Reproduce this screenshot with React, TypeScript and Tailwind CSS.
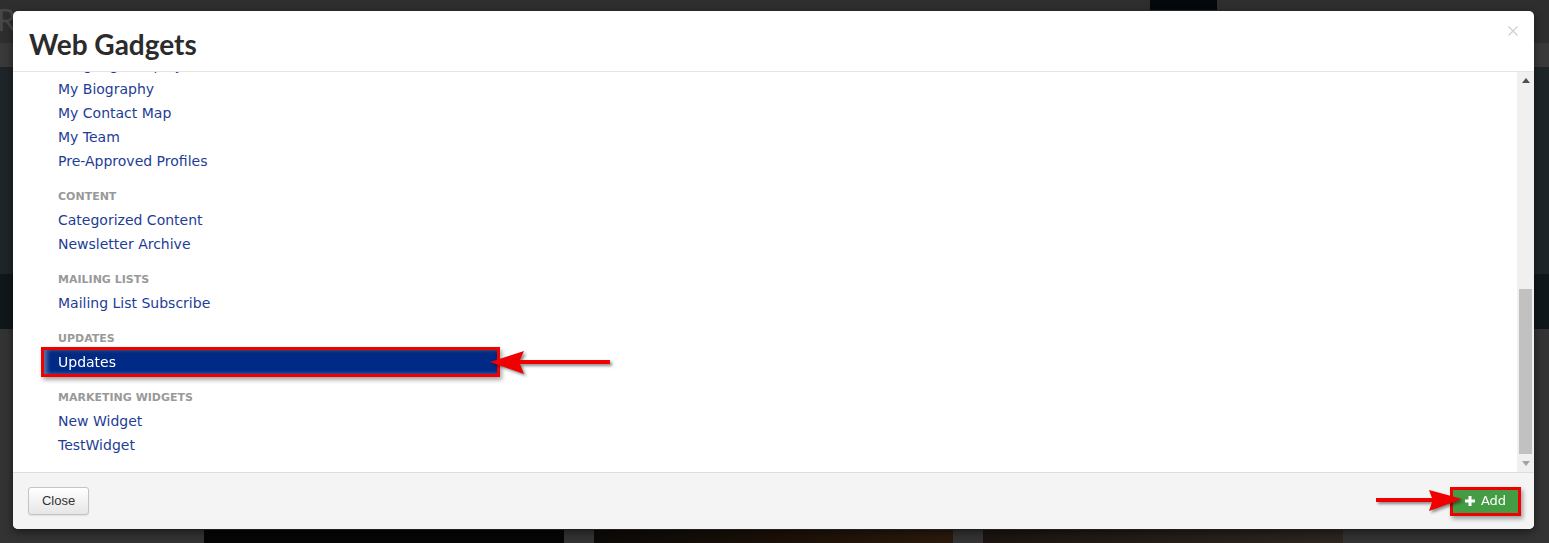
import React from "react";

type Section = { title?: string; items: string[] };

const sections: Section[] = [
  { items: ["Language Display", "My Biography", "My Contact Map", "My Team", "Pre-Approved Profiles"] },
  { title: "CONTENT", items: ["Categorized Content", "Newsletter Archive"] },
  { title: "MAILING LISTS", items: ["Mailing List Subscribe"] },
  { title: "UPDATES", items: ["Updates"] },
  { title: "MARKETING WIDGETS", items: ["New Widget", "TestWidget"] },
];

const verdana = "font-['DejaVu_Sans','Verdana',sans-serif]";

function LeftArrow() {
  return (
    <svg
      className="absolute left-[488px] top-[349px] drop-shadow-[2px_2px_1.5px_rgba(0,0,0,0.45)]"
      width="126"
      height="28"
      viewBox="0 0 126 28"
    >
      <path d="M2 13 L36 2 L32 11 L122 11 L122 15 L32 15 L36 25 Z" fill="#f00000" />
    </svg>
  );
}

function RightArrow() {
  return (
    <svg
      className="absolute left-[1374px] top-[488px] drop-shadow-[2px_2px_1.5px_rgba(0,0,0,0.45)]"
      width="92"
      height="28"
      viewBox="0 0 92 28"
    >
      <path d="M2 10 L58 10 L55 2 L88 11 L55 23 L58 14 L2 14 Z" fill="#f00000" />
    </svg>
  );
}

function Scrollbar() {
  return (
    <div className="flex w-[17px] shrink-0 flex-col bg-[#f0f0f0]">
      <div className="flex h-[17px] items-center justify-center">
        <svg width="8" height="5" viewBox="0 0 8 5">
          <path d="M0 5 L4 0 L8 5 Z" fill="#505050" />
        </svg>
      </div>
      <div className="h-[200px]" />
      <div className="mx-[2px] h-[165px] bg-[#c1c1c1]" />
      <div className="flex-1" />
      <div className="flex h-[17px] items-center justify-center">
        <svg width="8" height="5" viewBox="0 0 8 5">
          <path d="M0 0 L8 0 L4 5 Z" fill="#a3a3a3" />
        </svg>
      </div>
    </div>
  );
}

function GadgetList() {
  return (
    <div className="min-w-0 flex-1 overflow-hidden">
      <div className={`-mt-[19px] pl-[31px] ${verdana}`}>
        {sections.map((s, i) => (
          <div key={i} className={s.title ? "pt-[10px]" : ""}>
            {s.title && (
              <div className="h-[25px] pl-[14px] pt-[2px] text-[11px] font-bold leading-[23px] text-[#999]">
                {s.title}
              </div>
            )}
            {s.items.map((item) =>
              item === "Updates" ? (
                <div
                  key={item}
                  className="h-6 w-[453px] bg-[#012a87] pl-[14px] text-[14px] leading-6 text-white shadow-[inset_3px_0_4px_rgba(160,170,200,0.6),inset_0_2px_3px_rgba(0,0,0,0.35)] outline-3 outline-[#f00000] drop-shadow-[2px_3px_2px_rgba(0,0,0,0.35)]"
                >
                  {item}
                </div>
              ) : (
                <div key={item} className="h-6 pl-[14px] text-[14px] leading-6 text-[#1d3d96]">
                  {item}
                </div>
              )
            )}
          </div>
        ))}
      </div>
    </div>
  );
}

export default function App() {
  return (
    <div className="relative h-[543px] w-[1549px] overflow-hidden bg-[#333333]">
      {/* page behind the overlay */}
      <div className="h-[43px] bg-[#2e2e2e]">
        <div className="-ml-[3px] pt-[4px] font-['Lato',sans-serif] text-[30px] leading-none text-[#474747]">R</div>
      </div>
      <div className="h-[24px] bg-[#393939]" />
      <div className="h-[207px] bg-[#1e2529]" />
      <div className="h-[55px] bg-[#10171b]" />
      <div className="h-[201px]" />
      <div className="flex gap-[30px] pl-[204px]">
        <div className="h-[14px] w-[360px] bg-[#050505]" />
        <div className="h-[14px] w-[359px] bg-gradient-to-r from-[#0c0a08] via-[#1a1008] to-[#2a1a0c]" />
        <div className="h-[14px] w-[360px] bg-gradient-to-r from-[#1c1410] to-[#2c2520]" />
      </div>
      <div className="absolute left-[1150px] top-0 h-[10px] w-[67px] bg-[#02080c]" />

      {/* modal */}
      <div className="absolute left-[13px] top-[11px] flex h-[518px] w-[1521px] flex-col overflow-hidden rounded-[5px] bg-white shadow-[0_3px_9px_rgba(0,0,0,0.5)]">
        <div className="flex h-[61px] shrink-0 items-start justify-between border-b border-[#e5e5e5] pl-[16px] pr-[16px]">
          <h1 className="pt-[18px] font-['Lato',sans-serif] text-[28px] font-bold leading-[31px] text-[#2b2b2b]">
            Web Gadgets
          </h1>
          <button className="mt-[15px]">
            <svg width="10" height="10" viewBox="0 0 10 10">
              <path d="M0.5 0.5 L9.5 9.5 M9.5 0.5 L0.5 9.5" stroke="#cfcfcf" strokeWidth="1.2" />
            </svg>
          </button>
        </div>
        <div className="flex h-[400px] shrink-0">
          <GadgetList />
          <Scrollbar />
        </div>
        <div className="flex flex-1 items-center justify-between border-t border-[#dddddd] bg-[#f4f4f4] pl-[15px] pr-[16px]">
          <button className="h-[28px] w-[61px] rounded-[3px] border border-[#c4c4c4] bg-gradient-to-b from-white to-[#e6e6e6] font-['Liberation_Sans',sans-serif] text-[13px] text-[#333] shadow-[0_1px_1px_rgba(0,0,0,0.08)]">
            Close
          </button>
          <button
            className={`flex h-[23px] w-[65px] items-center justify-center gap-[6px] bg-[#449d44] text-[13px] text-white outline-3 outline-[#f00000] drop-shadow-[2px_3px_2px_rgba(0,0,0,0.35)] ${verdana}`}
          >
            <svg width="10" height="10" viewBox="0 0 10 10">
              <path d="M3.5 0 H6.5 V3.5 H10 V6.5 H6.5 V10 H3.5 V6.5 H0 V3.5 H3.5 Z" fill="#fff" />
            </svg>
            <span>Add</span>
          </button>
        </div>
      </div>

      <LeftArrow />
      <RightArrow />
    </div>
  );
}
